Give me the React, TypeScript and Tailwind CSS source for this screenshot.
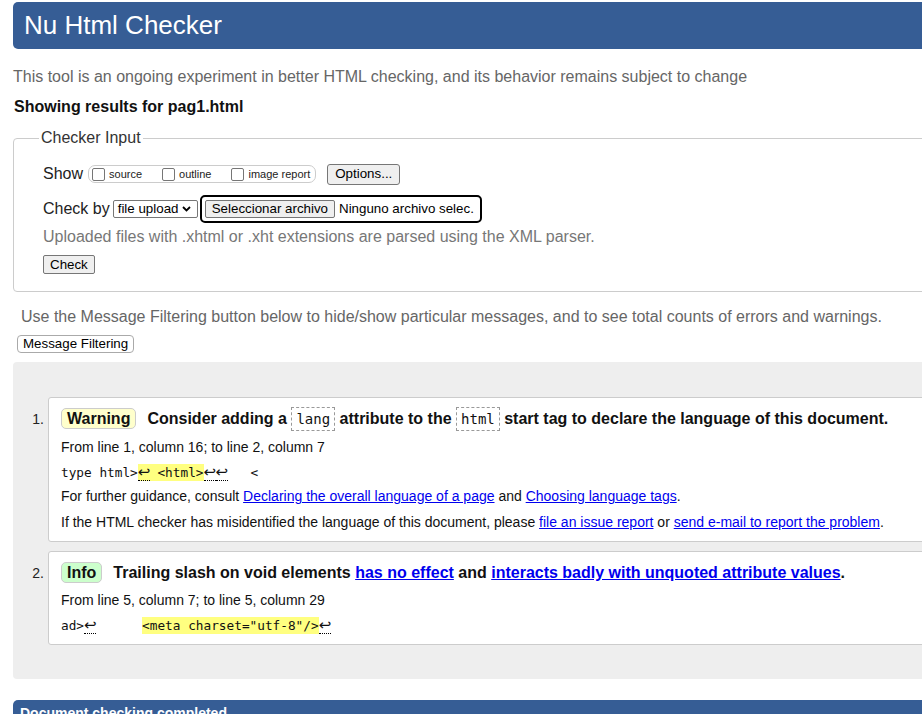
import React from "react";

const sans = { fontFamily: '"Liberation Sans", Arial, sans-serif' };

function Lf() {
  return (
    <span className="inline-block w-[12px] h-[17px] leading-[17px] border-b border-dotted border-black text-center text-[15px] font-['DejaVu_Sans',sans-serif]">
      ↩
    </span>
  );
}

function Badge({ label, color }: { label: string; color: string }) {
  return (
    <span
      className={`inline-block px-[5px] leading-[19px] border border-[#ccc] rounded-[5px] ${color}`}
    >
      {label}
    </span>
  );
}

function Code({ children }: { children: React.ReactNode }) {
  return (
    <code className="inline-block px-[4px] leading-[22px] border border-dashed border-[#999] font-normal text-[14px] font-['DejaVu_Sans_Mono',monospace]">
      {children}
    </code>
  );
}

const A = ({ children }: { children: React.ReactNode }) => (
  <a href="#" className="text-[#0000ee] underline">
    {children}
  </a>
);

export default function App() {
  return (
    <div className="w-full h-[714px] overflow-hidden bg-white text-black" style={sans}>
      <div className="w-[1000px] pl-[13px] pt-[2px]">
        <div className="h-[47px] bg-[#365d95] rounded-[5px] pl-[11px] pt-[8px] text-white text-[26px] leading-[30px]">
          Nu Html Checker
        </div>
        <p className="mt-[18px] text-[16px] leading-[20px] text-[#666]">
          This tool is an ongoing experiment in better HTML checking, and its behavior remains subject to change
        </p>
        <p className="mt-[10px] pl-[1px] text-[16px] leading-[20px] font-bold text-[#111]">
          Showing results for pag1.html
        </p>

        <fieldset className="mt-[11px] border border-[#ccc] rounded-[4px] pl-[29px] pb-[17px]">
          <legend className="ml-[-4px] px-[2px] text-[16px] leading-[20px] text-[#333]">Checker Input</legend>
          <div className="mt-[14px] h-[24px] flex items-center text-[16px]">
            <span className="text-[#222]">Show</span>
            <span className="ml-[5px] h-[18px] flex items-center border border-[#ccc] rounded-[7px] pr-[5px] text-[11px] text-[#222]">
              <span className="ml-[3px] mr-[4px] w-[13px] h-[13px] border border-[#767676] rounded-[2px] bg-white" />
              <span className="mr-[17px]">source</span>
              <span className="ml-[3px] mr-[4px] w-[13px] h-[13px] border border-[#767676] rounded-[2px] bg-white" />
              <span className="mr-[17px]">outline</span>
              <span className="ml-[3px] mr-[4px] w-[13px] h-[13px] border border-[#767676] rounded-[2px] bg-white" />
              <span>image report</span>
            </span>
            <span className="ml-[11px] h-[21px] flex items-center px-[7px] border border-[#767676] rounded-[3px] bg-[#efefef] text-[13.33px] text-black">
              Options...
            </span>
          </div>
          <div className="mt-[9px] h-[28px] flex items-center text-[16px]">
            <span className="text-[#222]">Check by</span>
            <span className="ml-[3px] h-[18px] w-[85px] flex items-center pl-[4px] border border-[#767676] rounded-[2px] bg-white text-[13.33px] text-black">
              file upload
              <svg className="ml-[4px]" width="9" height="6" viewBox="0 0 9 6">
                <path d="M1 1 L4.5 4.5 L8 1" stroke="#000" strokeWidth="1.8" fill="none" />
              </svg>
            </span>
            <span className="ml-[2px] h-[28px] flex items-center pl-[3px] pr-[6px] border-2 border-black rounded-[5px] text-[13.33px] text-black">
              <span className="h-[18px] flex items-center px-[6px] border border-[#767676] rounded-[2px] bg-[#efefef]">
                Seleccionar archivo
              </span>
              <span className="ml-[4px]">Ninguno archivo selec.</span>
            </span>
          </div>
          <p className="mt-[4px] text-[16px] leading-[20px] text-[#777]">
            Uploaded files with .xhtml or .xht extensions are parsed using the XML parser.
          </p>
          <div className="mt-[8px] flex">
            <span className="h-[19px] flex items-center px-[6px] border border-[#767676] rounded-[2px] bg-[#efefef] text-[13.33px] text-black">
              Check
            </span>
          </div>
        </fieldset>

        <p className="mt-[15px] pl-[8px] text-[16px] leading-[20px] text-[#666]">
          Use the Message Filtering button below to hide/show particular messages, and to see total counts of errors and warnings.
        </p>
        <div className="mt-[8px] ml-[4px] flex">
          <span className="h-[18px] flex items-center px-[5px] border border-[#aaa] rounded-[4px] bg-white text-[13.33px] text-black">
            Message Filtering
          </span>
        </div>

        <div className="mt-[9px] bg-[#eeeeee] rounded-[4px] pt-[35px] pb-[34px] flex flex-col gap-[9px]">
          {/* item 1 */}
          <div className="flex">
            <div className="w-[35px] pr-[4px] pt-[12px] text-right text-[14px] leading-[20px] text-[#222]">1.</div>
            <div className="flex-1 bg-white border border-[#ccc] rounded-[3px] pl-[12px] pt-[9px] pb-[9px]">
              <p className="text-[16px] leading-[24px] font-bold text-[#111]">
                <Badge label="Warning" color="bg-[#ffffcc]" />
                <span className="ml-[11px]">Consider adding a </span>
                <Code>lang</Code> attribute to the <Code>html</Code> start tag to declare the language of this document.
              </p>
              <p className="mt-[6px] text-[14px] leading-[20px] text-[#111]">From line 1, column 16; to line 2, column 7</p>
              <p className="mt-[5px] h-[20px] pt-[2px] text-[12.75px] leading-[17px] whitespace-pre text-[#111] font-['DejaVu_Sans_Mono',monospace]">
                <span>type html&gt;</span>
                <span className="bg-[#ffff80] inline-block h-[17px]"><Lf /> &lt;html&gt;</span>
                <Lf />
                <Lf />
                <span>{"   <"}</span>
              </p>
              <p className="mt-[4px] text-[14px] leading-[20px] text-[#111]">
                For further guidance, consult <A>Declaring the overall language of a page</A> and <A>Choosing language tags</A>.
              </p>
              <p className="mt-[6px] text-[14px] leading-[20px] text-[#111]">
                If the HTML checker has misidentified the language of this document, please <A>file an issue report</A> or <A>send e-mail to report the problem</A>.
              </p>
            </div>
          </div>
          {/* item 2 */}
          <div className="flex">
            <div className="w-[35px] pr-[4px] pt-[12px] text-right text-[14px] leading-[20px] text-[#222]">2.</div>
            <div className="flex-1 bg-white border border-[#ccc] rounded-[3px] pl-[12px] pt-[9px] pb-[9px]">
              <p className="text-[16px] leading-[24px] font-bold text-[#111]">
                <Badge label="Info" color="bg-[#ccffcc]" />
                <span className="ml-[11px]">Trailing slash on void elements </span>
                <A>has no effect</A> and <A>interacts badly with unquoted attribute values</A>.
              </p>
              <p className="mt-[5px] text-[14px] leading-[20px] text-[#111]">From line 5, column 7; to line 5, column 29</p>
              <p className="mt-[5px] h-[20px] pt-[2px] text-[12.75px] leading-[17px] whitespace-pre text-[#111] font-['DejaVu_Sans_Mono',monospace]">
                <span>ad&gt;</span>
                <Lf />
                <span>{"      "}</span>
                <span className="bg-[#ffff80] inline-block h-[17px]">&lt;meta charset="utf-8"/&gt;</span>
                <Lf />
              </p>
            </div>
          </div>
        </div>

        <div className="mt-[21px] h-[40px] bg-[#365d95] rounded-[5px] pl-[7px] pt-[3px] text-white text-[14px] leading-[20px] font-bold">
          Document checking completed.
        </div>
      </div>
    </div>
  );
}
